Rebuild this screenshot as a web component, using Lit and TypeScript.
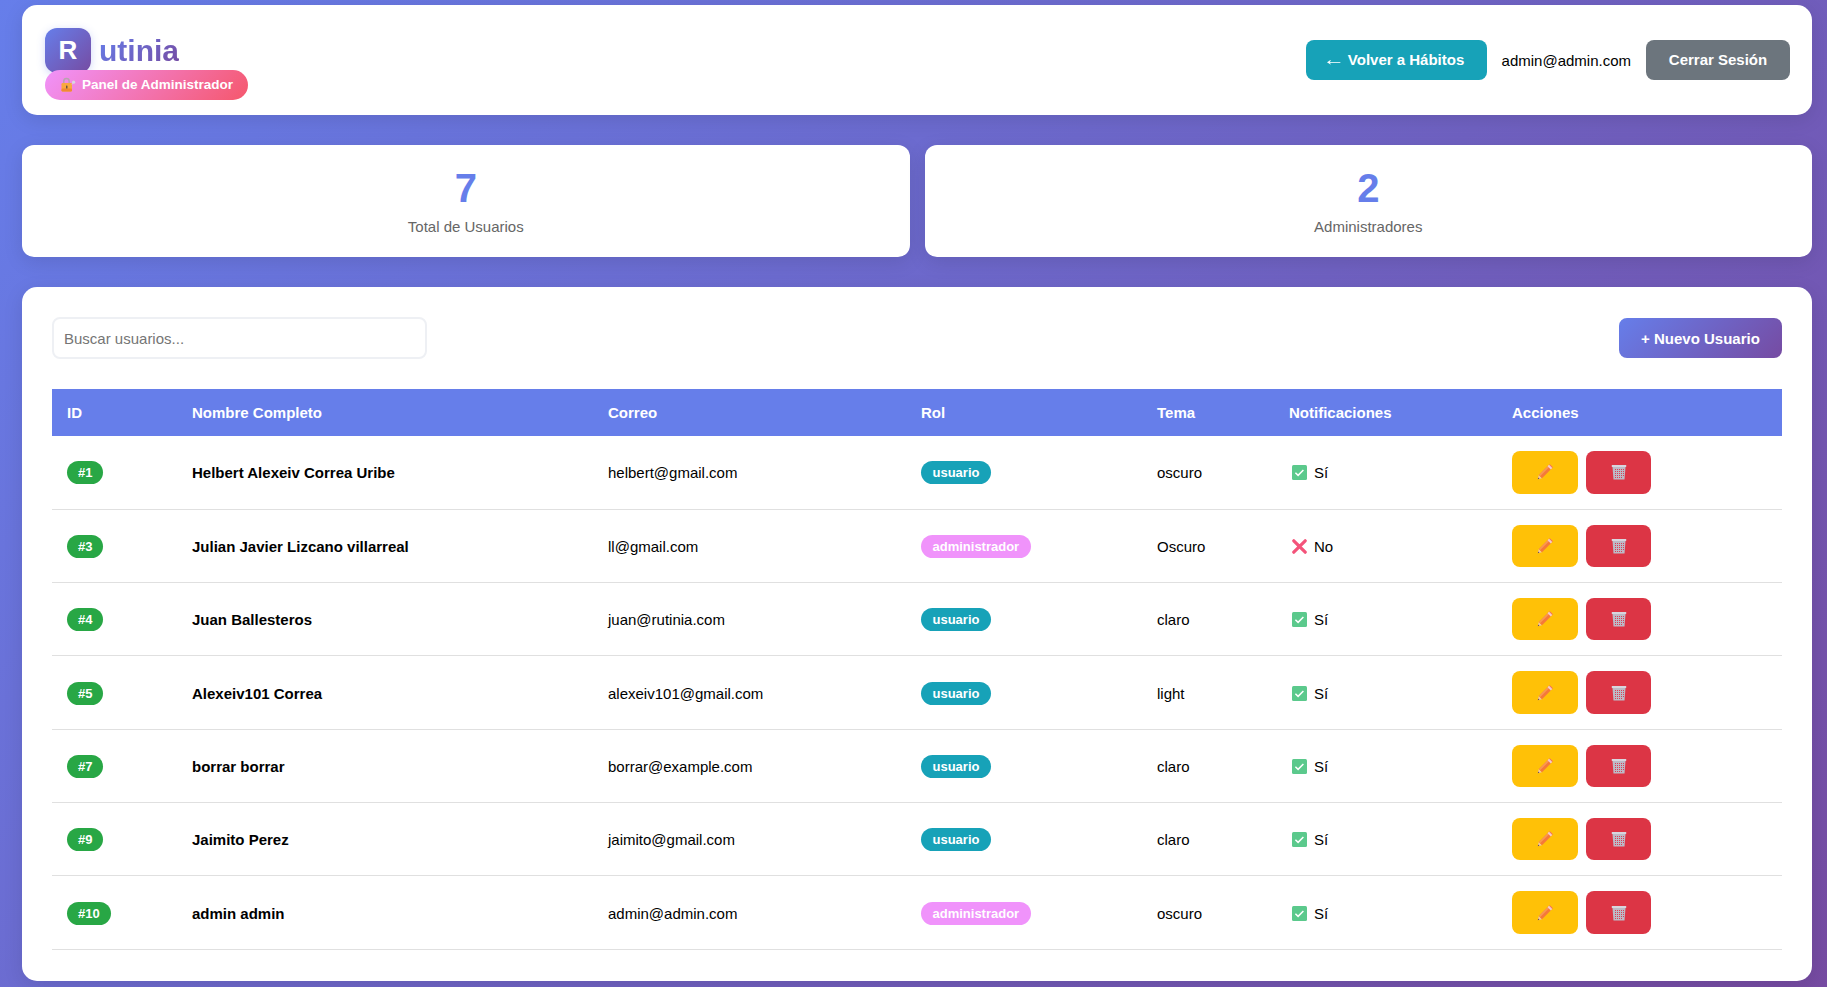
import { LitElement, html, css, svg } from 'lit';
import { customElement, state } from 'lit/decorators.js';

interface AdminUser {
  id: number;
  name: string;
  email: string;
  role: 'usuario' | 'administrador';
  theme: string;
  notify: boolean;
}

const USERS: AdminUser[] = [
  { id: 1, name: 'Helbert Alexeiv Correa Uribe', email: 'helbert@gmail.com', role: 'usuario', theme: 'oscuro', notify: true },
  { id: 3, name: 'Julian Javier Lizcano villarreal', email: 'll@gmail.com', role: 'administrador', theme: 'Oscuro', notify: false },
  { id: 4, name: 'Juan Ballesteros', email: 'juan@rutinia.com', role: 'usuario', theme: 'claro', notify: true },
  { id: 5, name: 'Alexeiv101 Correa', email: 'alexeiv101@gmail.com', role: 'usuario', theme: 'light', notify: true },
  { id: 7, name: 'borrar borrar', email: 'borrar@example.com', role: 'usuario', theme: 'claro', notify: true },
  { id: 9, name: 'Jaimito Perez', email: 'jaimito@gmail.com', role: 'usuario', theme: 'claro', notify: true },
  { id: 10, name: 'admin admin', email: 'admin@admin.com', role: 'administrador', theme: 'oscuro', notify: true },
];

const lockIcon = svg`<svg class="emoji" width="15" height="15" viewBox="0 0 15 15">
  <path d="M2.8 7V4.2a2.6 2.6 0 0 1 5.4 0V7" fill="none" stroke="#b8a4ae" stroke-width="1.5"/>
  <rect x="0.5" y="6" width="10.5" height="8.5" rx="1.2" fill="#f9a83f"/>
  <rect x="0.5" y="11.5" width="10.5" height="3" rx="1.2" fill="#f08a32"/>
  <rect x="5" y="8.5" width="1.5" height="3" rx=".6" fill="#6a5240"/>
  <circle cx="12.6" cy="5.2" r="1.6" fill="#d9d6e0"/>
  <path d="M11.6 6.4l-.6 1" stroke="#d9d6e0" stroke-width="1"/>
</svg>`;

const pencilIcon = svg`<svg class="emoji" width="16" height="16" viewBox="0 0 16 16">
  <path d="M0.8 15.2l1-4.2 3.2 3.2z" fill="#f3c9a0"/>
  <path d="M0.8 15.2l.4-1.7 1.3 1.3z" fill="#6b4a55"/>
  <path d="M1.8 11L11 1.8l3.2 3.2L5 14.2z" fill="#f5793a"/>
  <path d="M1.8 11L11 1.8l1.3 1.3L3.1 12.3z" fill="#fa9a4e"/>
  <path d="M12 .8l.8-.6 3 3-.6.8z" fill="#f2646b"/>
  <path d="M10.6 2.2l1.4-1.4 3.2 3.2-1.4 1.4z" fill="#f3c9d2"/>
</svg>`;

const trashIcon = svg`<svg class="emoji" width="16" height="16" viewBox="0 0 16 16">
  <path d="M1.5 3h13l-1 12.5h-11z" fill="#bdbac6"/>
  <path d="M4.5 5v9M6.5 5v9M8.5 5v9M10.5 5v9M12.5 5v8" stroke="#dc3f55" stroke-width="1" stroke-dasharray="1 1" fill="none"/>
  <rect x="0.8" y="1" width="14.4" height="2" fill="#d8d6de"/>
</svg>`;

const checkIcon = svg`<svg class="emoji" width="15" height="15" viewBox="0 0 15 15">
  <rect width="15" height="15" rx="1.5" fill="#5bc98c"/>
  <path d="M3.4 7.8l2.7 2.6 5.3-5.4" fill="none" stroke="#fff" stroke-width="1.5"/>
</svg>`;

const crossIcon = svg`<svg class="emoji" width="15" height="15" viewBox="0 0 15 15">
  <path d="M1.8 1.8l11.4 11.4M13.2 1.8L1.8 13.2" fill="none" stroke="#f4537a" stroke-width="3.2" stroke-linecap="round"/>
</svg>`;

@customElement('app-root')
export class AppRoot extends LitElement {
  @state() private users = USERS;

  static styles = css`
    :host {
      display: block;
      box-sizing: border-box;
      height: 987px;
      overflow: hidden;
      padding: 5px 15px 6px 22px;
      background: linear-gradient(135deg, #667eea 0%, #764ba2 100%);
      font-family: 'Liberation Sans', Arial, sans-serif;
      font-size: 15px;
      color: #000;
    }

    * {
      box-sizing: border-box;
    }

    .card {
      background: #fff;
      border-radius: 15px;
      box-shadow: 0 5px 20px rgba(0, 0, 0, 0.1);
    }

    .topbar {
      display: flex;
      align-items: center;
      justify-content: space-between;
      height: 110px;
      padding: 0 22px 0 23px;
    }

    .brand {
      display: flex;
      flex-direction: column;
      align-items: flex-start;
      margin-top: 7px;
    }

    .logo {
      display: flex;
      align-items: center;
      gap: 8px;
      height: 45px;
    }

    .logo-mark {
      display: flex;
      align-items: center;
      justify-content: center;
      width: 46px;
      height: 45px;
      border-radius: 12px;
      background: linear-gradient(135deg, #667eea, #764ba2);
      box-shadow: 0 2px 8px rgba(102, 126, 234, 0.3);
      color: #fff;
      font-size: 26px;
      font-weight: 700;
    }

    .logo-text {
      padding-top: 1px;
      font-size: 30px;
      font-weight: 700;
      background: linear-gradient(135deg, #667eea, #764ba2);
      -webkit-background-clip: text;
      background-clip: text;
      color: transparent;
    }

    .panel-badge {
      position: relative;
      display: flex;
      align-items: center;
      gap: 6px;
      height: 30px;
      margin-top: -3px;
      padding: 0 15px 0 16px;
      border-radius: 15px;
      background: linear-gradient(135deg, #f093fb, #f5576c);
      color: #fff;
      font-size: 13.5px;
      font-weight: 700;
    }

    .top-actions {
      display: flex;
      align-items: center;
      gap: 15px;
    }

    .btn {
      display: inline-flex;
      align-items: center;
      justify-content: center;
      height: 40px;
      border: none;
      border-radius: 8px;
      color: #fff;
      font-family: inherit;
      font-size: 15px;
      font-weight: 700;
    }

    .btn-info {
      gap: 3px;
      width: 181px;
      padding: 0 0 2px;
      background: #17a2b8;
    }

    .arrow {
      display: inline-block;
      font-size: 17px;
      font-weight: 400;
      line-height: 1;
      transform: scaleX(1.3);
      transform-origin: right center;
    }

    .btn-muted {
      width: 144px;
      padding: 0 0 2px;
      background: #6c757d;
    }

    .btn-primary {
      width: 163px;
      background: linear-gradient(135deg, #667eea, #764ba2);
    }

    .stats {
      display: grid;
      grid-template-columns: 1fr 1fr;
      gap: 15px;
      margin-top: 30px;
    }

    .stat {
      display: flex;
      flex-direction: column;
      align-items: center;
      height: 112px;
      padding-top: 22px;
      border-radius: 12px;
    }

    .stat-value {
      color: #667eea;
      font-size: 40px;
      font-weight: 700;
      line-height: 42px;
    }

    .stat-label {
      margin-top: 9px;
      color: #666;
      font-size: 15px;
    }

    .users {
      margin-top: 30px;
      height: 694px;
      padding: 30px;
    }

    .toolbar {
      display: flex;
      align-items: center;
      justify-content: space-between;
      margin-bottom: 30px;
    }

    .search {
      width: 375px;
      height: 42px;
      padding: 0 10px;
      border: 2px solid #eef0f4;
      border-radius: 8px;
      outline: none;
      font-family: inherit;
      font-size: 15px;
    }

    table {
      width: 100%;
      border-collapse: collapse;
      table-layout: fixed;
    }

    th {
      height: 47px;
      padding: 0 15px;
      background: #667eea;
      color: #fff;
      font-size: 15px;
      font-weight: 700;
      text-align: left;
    }

    td {
      height: 73.33px;
      padding: 1px 15px 0;
      border-bottom: 1px solid #e0e0e0;
      vertical-align: middle;
    }

    td.actions {
      padding-top: 0;
    }

    .name {
      font-weight: 700;
    }

    .pill {
      display: inline-block;
      padding: 4px 11.5px;
      border-radius: 12px;
      color: #fff;
      font-size: 13px;
      font-weight: 700;
      line-height: 15px;
      vertical-align: middle;
    }

    .id-pill {
      padding: 4px 11px;
      background: #28a745;
    }

    .role-usuario {
      background: #17a2b8;
    }

    .role-administrador {
      background: #f093fb;
    }

    .notify {
      display: flex;
      align-items: center;
      gap: 7px;
      padding-left: 3px;
    }

    .row-actions {
      display: flex;
      gap: 8px;
    }

    .icon-btn {
      height: 42.33px;
    }

    .icon-edit {
      width: 66px;
      background: #ffc107;
    }

    .icon-delete {
      width: 65px;
      background: #dc3545;
    }

    .emoji {
      display: block;
      flex-shrink: 0;
    }
  `;

  private renderRow(user: AdminUser) {
    return html`
      <tr>
        <td><span class="pill id-pill">#${user.id}</span></td>
        <td class="name">${user.name}</td>
        <td>${user.email}</td>
        <td><span class="pill role-${user.role}">${user.role}</span></td>
        <td>${user.theme}</td>
        <td>
          <div class="notify">
            ${user.notify ? checkIcon : crossIcon}
            <span>${user.notify ? 'Sí' : 'No'}</span>
          </div>
        </td>
        <td class="actions">
          <div class="row-actions">
            <button class="btn icon-btn icon-edit" title="Editar">${pencilIcon}</button>
            <button class="btn icon-btn icon-delete" title="Eliminar">${trashIcon}</button>
          </div>
        </td>
      </tr>
    `;
  }

  render() {
    const admins = this.users.filter((u) => u.role === 'administrador').length;
    return html`
      <header class="card topbar">
        <div class="brand">
          <div class="logo">
            <div class="logo-mark">R</div>
            <span class="logo-text">utinia</span>
          </div>
          <div class="panel-badge">${lockIcon}<span>Panel de Administrador</span></div>
        </div>
        <div class="top-actions">
          <button class="btn btn-info"><span class="arrow">←</span><span>Volver a Hábitos</span></button>
          <span>admin@admin.com</span>
          <button class="btn btn-muted">Cerrar Sesión</button>
        </div>
      </header>

      <section class="stats">
        <div class="card stat">
          <div class="stat-value">${this.users.length}</div>
          <div class="stat-label">Total de Usuarios</div>
        </div>
        <div class="card stat">
          <div class="stat-value">${admins}</div>
          <div class="stat-label">Administradores</div>
        </div>
      </section>

      <section class="card users">
        <div class="toolbar">
          <input class="search" type="text" placeholder="Buscar usuarios..." />
          <button class="btn btn-primary">+ Nuevo Usuario</button>
        </div>
        <table>
          <colgroup>
            <col style="width: 125px" />
            <col style="width: 416px" />
            <col style="width: 313px" />
            <col style="width: 236px" />
            <col style="width: 132px" />
            <col style="width: 223px" />
            <col style="width: 285px" />
          </colgroup>
          <thead>
            <tr>
              <th>ID</th>
              <th>Nombre Completo</th>
              <th>Correo</th>
              <th>Rol</th>
              <th>Tema</th>
              <th>Notificaciones</th>
              <th>Acciones</th>
            </tr>
          </thead>
          <tbody>
            ${this.users.map((u) => this.renderRow(u))}
          </tbody>
        </table>
      </section>
    `;
  }
}
